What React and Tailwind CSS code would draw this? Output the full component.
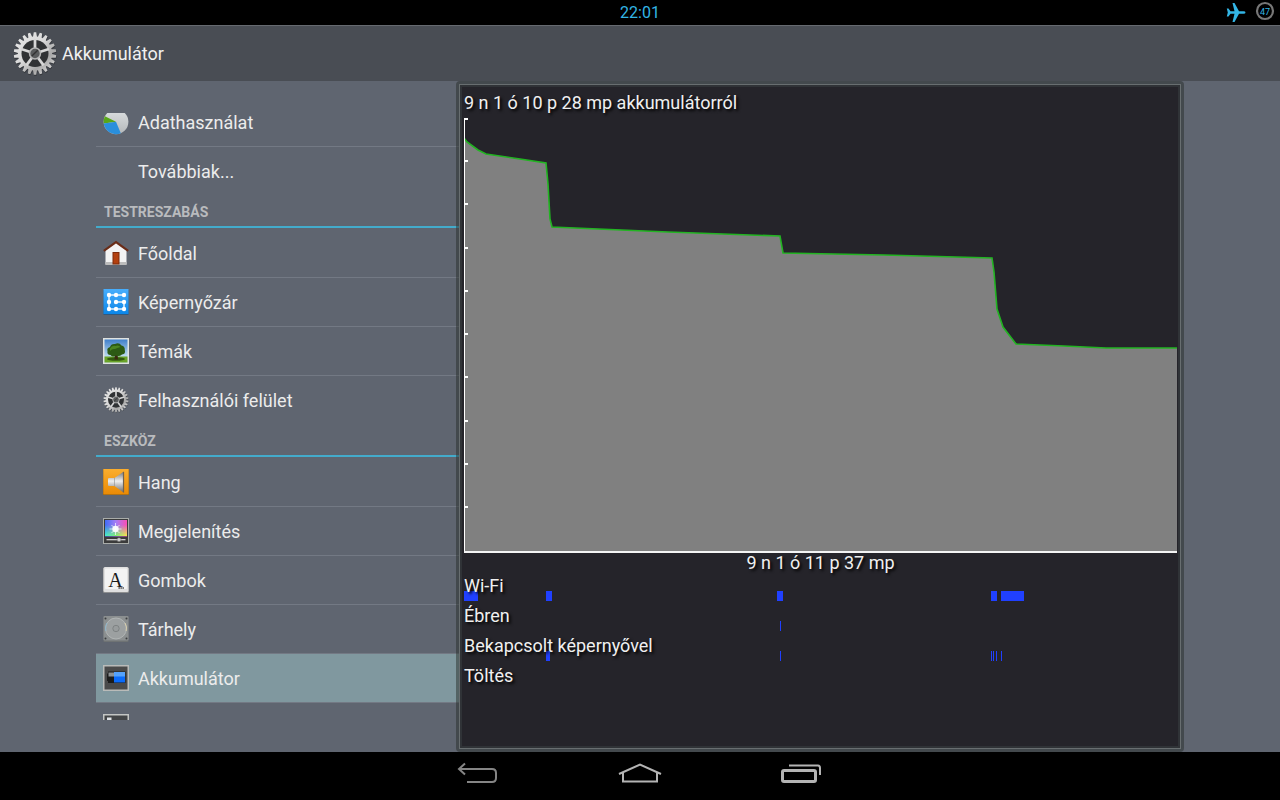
const ACCENT = "#33b5e5";

// battery level over time, in chart units (713 x 435)
const LEVELS = [
  [0, 20], [3, 24], [14, 32], [22, 36], [56, 41], [82, 45], [84, 66], [86, 101],
  [88, 109], [204, 114], [316, 118], [319, 135], [420, 137], [528, 140],
  [530, 154], [533, 191], [539, 209], [552, 226], [600, 228], [642, 230], [713, 230],
];

const ACTIVITY = [
  { label: "Wi-Fi", bars: [[0, 14], [82, 6], [313, 6], [527, 6], [537, 23]] },
  { label: "Ébren", bars: [[316, 1]] },
  { label: "Bekapcsolt képernyővel", bars: [[82, 4], [316, 1], [527, 1], [529, 1], [532, 1], [537, 1]] },
  { label: "Töltés", bars: [] },
];

const TEETH = 22;

function gearPath() {
  const pts = [];
  for (let i = 0; i < TEETH; i++) {
    const a = (i / TEETH) * Math.PI * 2;
    const step = (Math.PI * 2) / TEETH;
    [[-0.4, 17.5], [-0.2, 21.7], [0.2, 21.7], [0.4, 17.5]].forEach(([o, r]) => {
      pts.push(`${(22 + r * Math.sin(a + o * step)).toFixed(2)} ${(22 - r * Math.cos(a + o * step)).toFixed(2)}`);
    });
  }
  return `M${pts.join("L")}Z`;
}

function Gear({ id, className }) {
  return (
    <svg viewBox="0 0 44 45" className={className} aria-hidden="true">
      <defs>
        <linearGradient id={id} x1="0" y1="0" x2="1" y2="1">
          <stop offset="0" stopColor="#e8e8e8" />
          <stop offset="0.45" stopColor="#d8d8d8" />
          <stop offset="0.7" stopColor="#a8a8a8" />
          <stop offset="1" stopColor="#f2f2f2" />
        </linearGradient>
      </defs>
      <path d={gearPath()} fill="#25272a" opacity="0.6" transform="translate(0.4 1)" />
      <path d={gearPath()} fill={`url(#${id})`} />
      <circle cx="22" cy="22" r="13.8" fill="#303234" />
      {[0, 72, 144, 216, 288].map((deg) => (
        <path key={deg} d="M22 17V7" stroke="#d6d6d6" strokeWidth="2.8" transform={`rotate(${deg} 22 22)`} />
      ))}
      <circle cx="22" cy="22" r="5.6" fill="#595b5c" stroke="#b5b5b5" strokeWidth="1.6" />
      <path d="M18.8 24.5L25 18.5" stroke="#333" strokeWidth="1.5" />
    </svg>
  );
}

function Icon({ children }) {
  return (
    <svg viewBox="0 0 26 26" className="size-[26px]" aria-hidden="true">
      {children}
    </svg>
  );
}

const DataIcon = () => (
  <Icon>
    <defs>
      <linearGradient id="pie" x1="0" y1="0" x2="0" y2="1">
        <stop offset="0" stopColor="#dcdfe1" />
        <stop offset="1" stopColor="#b4b8ba" />
      </linearGradient>
    </defs>
    <circle cx="13" cy="12.8" r="12.4" fill="url(#pie)" />
    <path d="M13 12.800L1.900 7.200A12.400 12.400 0 0 0 .7 14.500Z" fill="#58a618" />
    <path d="M13 12.800L.7 14.500A12.400 12.400 0 0 0 17.800 24.200Z" fill="#2a8fdc" />
  </Icon>
);

const HomeIcon = () => (
  <Icon>
    <path d="M2.5 9.5L13 2L23.5 9.5V24.5H2.5Z" fill="#f3f3f3" />
    <path d="M2.5 22H23.5V25H2.5Z" fill="#bcbcbc" />
    <path d="M9.5 12H16.5V24.5H9.5Z" fill="#7e2a0b" />
    <path d="M10.5 13H15.5V23.5H10.5Z" fill="#b3400f" />
    <path d="M.8 10.8L13 2.2L25.2 10.8" fill="none" stroke="#6a2c17" strokeWidth="2.2" />
  </Icon>
);

const PatternIcon = () => (
  <Icon>
    <defs>
      <linearGradient id="pattern" x1="0" y1="0" x2="0" y2="1">
        <stop offset="0" stopColor="#48aefc" />
        <stop offset="1" stopColor="#0b86e8" />
      </linearGradient>
    </defs>
    <path d="M.5 1H25.5V26H.5Z" fill="#32587c" />
    <path d="M.5 0H25.5V25H.5Z" fill="url(#pattern)" />
    <path d="M21 6H6V20H21V13H13.5" fill="none" stroke="#e4f3ff" strokeWidth="1.5" />
    {[6, 13, 20].map((y) =>
      [6, 13, 21].map((x) => <circle key={`${x}-${y}`} cx={x} cy={y} r="2.2" fill="#fff" />)
    )}
  </Icon>
);

const ThemesIcon = () => (
  <Icon>
    <defs>
      <linearGradient id="sky" x1="0" y1="0" x2="0" y2="1">
        <stop offset="0" stopColor="#3f7fcb" />
        <stop offset="0.7" stopColor="#b8d8ee" />
      </linearGradient>
    </defs>
    <path d="M0 0H26V26H0Z" fill="#dfe2e0" />
    <path d="M1.5 1.5H24.5V24.5H1.5Z" fill="url(#sky)" />
    <path d="M1.5 18.5H24.5V24.5H1.5Z" fill="#6aa328" />
    <ellipse cx="13" cy="21" rx="9" ry="1.8" fill="#32590f" />
    <path d="M12 15H14.5L15 21.5H11.5Z" fill="#3b2a12" />
    <path d="M4.5 13Q3.5 10 7 9Q8 5.5 12 6Q16 4 18.5 7.5Q22 8 21.8 12Q23 16 19 16.5Q16 19 13 17.5Q9 19.5 7.5 17Q3.8 17 4.5 13Z" fill="#2c5a14" />
    <path d="M7 10.5Q9 7 12.5 8Q15.5 6.5 17.5 9Q14 10 12 11Q9 10.5 7 13Z" fill="#4b8522" />
  </Icon>
);

const SoundIcon = () => (
  <Icon>
    <defs>
      <linearGradient id="sound" x1="0" y1="0" x2="0" y2="1">
        <stop offset="0" stopColor="#fbae2e" />
        <stop offset="1" stopColor="#e98a05" />
      </linearGradient>
      <linearGradient id="horn" x1="0" y1="0" x2="0" y2="1">
        <stop offset="0" stopColor="#777" />
        <stop offset="0.45" stopColor="#efefef" />
        <stop offset="1" stopColor="#6c6c6c" />
      </linearGradient>
    </defs>
    <path d="M0 0H26V26.5H0Z" fill="#7b5a22" />
    <path d="M.3 0H25.7V25.5H.3Z" fill="url(#sound)" />
    <path d="M5 10Q5 9 6 9H11.5L20.5 2.8V23.5L11.5 17H6Q5 17 5 16Z" fill="url(#horn)" />
    <path d="M20.5 2.8V23.5" stroke="#6f6250" strokeWidth="1.2" />
    <path d="M11.5 9V17" stroke="#8d8d8d" strokeWidth=".6" />
  </Icon>
);

const DisplayIcon = () => (
  <Icon>
    <defs>
      <linearGradient id="hue" x1="0" y1="0" x2="1" y2="0">
        <stop offset="0" stopColor="#3f6cf5" />
        <stop offset="0.5" stopColor="#a57cf5" />
        <stop offset="1" stopColor="#fa4db4" />
      </linearGradient>
      <linearGradient id="hue2" x1="0" y1="0" x2="1" y2="0">
        <stop offset="0" stopColor="#43f0d0" />
        <stop offset="0.5" stopColor="#7df46d" />
        <stop offset="1" stopColor="#f6e94c" />
      </linearGradient>
      <linearGradient id="fade" x1="0" y1="0" x2="0" y2="1">
        <stop offset="0.3" stopColor="#fff" stopOpacity="0" />
        <stop offset="1" stopColor="#fff" />
      </linearGradient>
      <mask id="lower">
        <path d="M0 2H26V18H0Z" fill="url(#fade)" />
      </mask>
    </defs>
    <path d="M0 0H26V26H0Z" fill="#a9aca9" />
    <path d="M1 1H25V25H1Z" fill="#3b3b3b" />
    <path d="M2 2H24V18.5H2Z" fill="url(#hue)" />
    <path d="M2 2H24V18.5H2Z" fill="url(#hue2)" mask="url(#lower)" />
    <circle cx="12.5" cy="11" r="3.2" fill="#fff" opacity="0.9" />
    <path
      d="M12.5 5V17M6.500 11H18.500M8.500 7L16.500 15M16.500 7L8.500 15"
      stroke="#fff"
      strokeWidth="0.9"
      opacity="0.75"
    />
    <path d="M3.500 21.700H22.500" stroke="#ddd" strokeWidth="1.200" />
    <circle cx="16" cy="21.700" r="2" fill="#ccc" stroke="#666" strokeWidth=".5" />
  </Icon>
);

const KeysIcon = () => (
  <Icon>
    <rect y=".5" width="26" height="25.5" rx="1.5" fill="#8e8f90" />
    <rect x=".5" width="25" height="25" rx="1.5" fill="#e0e0e0" />
    <rect x="2" y="1.5" width="22" height="20.5" rx="1" fill="#f3f3f3" />
    <text x="12.5" y="19.5" textAnchor="middle" fontSize="20" fill="#1b1b1b" fontFamily="Liberation Serif, serif">A</text>
    <path d="M15.5 21H21" stroke="#333" strokeWidth="1.4" strokeDasharray="1.3 .7" />
  </Icon>
);

const StorageIcon = () => (
  <Icon>
    <rect x=".5" y=".5" width="25" height="25.5" rx="1" fill="#6f7374" />
    <rect x=".5" width="25" height="24.5" rx="1" fill="#8b8f90" />
    <circle cx="13" cy="12.5" r="10.5" fill="#9ca0a1" stroke="#b8bbbb" strokeWidth=".8" />
    <circle cx="13" cy="12.5" r="3.2" fill="#989c9d" stroke="#7b7f80" strokeWidth=".9" />
    <path d="M2.8 15A10.5 10.5 0 0 1 4 7" fill="none" stroke="#8eb5cb" strokeWidth="1" />
    <path d="M23.2 15A10.5 10.5 0 0 0 22 7" fill="none" stroke="#d8cfae" strokeWidth="1" />
    {[[2.5, 2.5], [23.5, 2.5], [2.5, 22.5], [23.5, 22.5]].map(([x, y]) => (
      <circle key={`${x}-${y}`} cx={x} cy={y} r="1" fill="#3c3f40" />
    ))}
  </Icon>
);

const BatteryIcon = () => (
  <Icon>
    <path d="M0 0H26V26H0Z" fill="#b9bbb9" />
    <path d="M1.5 1.5H24.5V24.5H1.5Z" fill="#4a4a4a" />
    <path d="M4 8.5H5V6.5H22.5V18H5V16H4Z" fill="#1d1d1d" />
    <path d="M5.5 7.5H11V11.5H5.5Z" fill="#8d9193" />
    <path d="M11 7H22V17.5H11Z" fill="#0b6bfa" />
    <path d="M11 7H22V11.5H11Z" fill="#55a2fc" />
  </Icon>
);

const AppsIcon = () => (
  <Icon>
    <path d="M0 0H26V26H0Z" fill="#c3c5c3" />
    <path d="M1.5 1.5H24.5V24.5H1.5Z" fill="#434547" />
    <path d="M4 3.5H8.5V8H4Z" fill="#dfe2e5" />
  </Icon>
);

const SECTIONS = [
  {
    items: [
      { label: "Adathasználat", icon: <DataIcon /> },
      { label: "Továbbiak..." },
    ],
  },
  {
    title: "Testreszabás",
    items: [
      { label: "Főoldal", icon: <HomeIcon /> },
      { label: "Képernyőzár", icon: <PatternIcon /> },
      { label: "Témák", icon: <ThemesIcon /> },
      { label: "Felhasználói felület", icon: <Gear id="gear-ui" className="size-[26px]" /> },
    ],
  },
  {
    title: "Eszköz",
    items: [
      { label: "Hang", icon: <SoundIcon /> },
      { label: "Megjelenítés", icon: <DisplayIcon /> },
      { label: "Gombok", icon: <KeysIcon /> },
      { label: "Tárhely", icon: <StorageIcon /> },
      { label: "Akkumulátor", icon: <BatteryIcon />, active: true },
      { label: "", icon: <AppsIcon />, name: "Alkalmazások" },
    ],
  },
];

function StatusBar() {
  return (
    <div className="relative flex h-[25px] shrink-0 items-center justify-center bg-black text-[#33b5e5]">
      <time className="text-base">22:01</time>
      <div className="absolute top-0 right-[5px] flex gap-[9px]">
        <svg viewBox="0 0 20 24" className="h-6 w-5" fill={ACCENT} aria-hidden="true">
          <path d="M19.500 12.500Q19.500 13.700 17.500 13.700H13L8.500 22H6.500L8.500 13.700H4.500L2.500 16.500H.8L1.800 12.500L.8 8.500H2.500L4.500 11.300H8.500L6.500 3H8.500L13 11.300H17.500Q19.500 11.300 19.500 12.500Z" />
        </svg>
        <svg viewBox="0 0 20 22" className="h-[22px] w-5" aria-hidden="true">
          <circle cx="10" cy="11" r="8" fill="none" stroke="#777" strokeWidth="2.2" />
          <text x="10" y="14.5" textAnchor="middle" fontSize="9" fill={ACCENT}>47</text>
        </svg>
      </div>
    </div>
  );
}

function SettingsList() {
  return (
    <nav className="my-8 w-[363px] shrink-0 overflow-hidden">
      <div className="-mt-[15px]">
        {SECTIONS.map((section, i) => (
          <section key={i}>
            {section.title && (
              <h2 className="mb-px flex h-8 items-center border-b-2 border-[#43abcb] px-2 pt-0.5 text-sm font-bold text-[#b9bbbe] uppercase">
                {section.title}
              </h2>
            )}
            <ul>
              {section.items.map((item, n) => (
                <li
                  key={n}
                  className="border-b border-[#737984] last:border-transparent"
                >
                  <a
                    href="#"
                    aria-label={item.name}
                    className={`flex h-12 items-center gap-[9px] pl-[7px] text-lg leading-none text-[#ececec] ${item.active ? "bg-[#80989f]" : ""}`}
                  >
                    <span className="w-[26px]">{item.icon}</span>
                    <span className="pt-0.5">{item.label}</span>
                  </a>
                </li>
              ))}
            </ul>
          </section>
        ))}
      </div>
    </nav>
  );
}

function BatteryChart() {
  const line = LEVELS.map((p) => p.join(" ")).join("L");

  return (
    <svg
      viewBox="0 0 713 435"
      preserveAspectRatio="none"
      className="min-h-0 w-full flex-1"
      role="img"
      aria-label="Akkumulátor töltöttsége"
    >
      <path d={`M0 435L${line}L713 435Z`} fill="#808080" />
      <path d={`M${line}`} fill="none" stroke="#22b422" strokeWidth="1.6" />
      <path d="M0 0H1V435H0Z" fill="#fff" />
      {[0, 42, 85, 129, 172, 215, 258, 302, 345, 388].map((y) => (
        <rect key={y} y={y} width="4" height="2" fill="#fff" />
      ))}
      <path d="M0 433H713V435H0Z" fill="#f4f4f4" />
    </svg>
  );
}

function BatteryPanel() {
  return (
    <main className="relative -ml-[3px] flex min-w-0 flex-1 rounded-sm border-3 border-[#272d29]/50">
      <div className="flex min-w-0 flex-1 border border-[#686e70]">
        <div className="flex min-w-0 flex-1 flex-col border-2 border-[#303337] bg-[#25242a] pt-px pr-px pb-[53px] pl-[2px] text-lg leading-[30px] text-[#f0f0f0] [text-shadow:2px_2px_3px_#000]">
          <p>9 n 1 ó 10 p 28 mp akkumulátorról</p>
          <BatteryChart />
          <p className="text-center leading-5">9 n 1 ó 11 p 37 mp</p>
          {ACTIVITY.map((row) => (
            <div key={row.label} className="relative h-[30px] leading-[26px]">
              {row.bars.map(([start, width]) => (
                <span
                  key={start}
                  className="absolute bottom-0.5 h-[10px] bg-[#2040ff]"
                  style={{ left: `${(start / 713) * 100}%`, width: `${(width / 713) * 100}%` }}
                />
              ))}
              <span className="relative">{row.label}</span>
            </div>
          ))}
        </div>
      </div>
    </main>
  );
}

function NavBar() {
  return (
    <footer className="flex h-12 shrink-0 items-center justify-center gap-[118px] bg-black pb-1">
      <button type="button" aria-label="Vissza">
        <svg viewBox="0 0 44 24" className="h-6 w-11" fill="none" stroke="#858585" strokeWidth="2">
          <path d="M3 7H36Q40 7 40 11V16Q40 20 36 20H11" />
          <path d="M9 1.5L3 7L9 12.5" />
        </svg>
      </button>
      <button type="button" aria-label="Kezdőképernyő">
        <svg viewBox="0 0 44 24" className="h-6 w-11" fill="none" stroke="#b4b4b4" strokeWidth="2">
          <path d="M1 12L22 2.5L43 12" />
          <path d="M5 10.5V19.5H39V10.5" />
        </svg>
      </button>
      <button type="button" aria-label="Legutóbbiak">
        <svg viewBox="0 0 44 24" className="h-6 w-11" fill="none" stroke="#b4b4b4" strokeWidth="2">
          <rect x="2.5" y="8.500" width="33" height="11" rx="1.5" strokeWidth="3" />
          <path d="M9 3.5H38Q40 3.5 40 6V13" />
        </svg>
      </button>
    </footer>
  );
}

export default function App() {
  return (
    <div className="flex h-screen min-h-[640px] flex-col bg-[#5f6570] font-[Roboto,sans-serif]">
      <StatusBar />
      <header className="flex h-14 shrink-0 items-center gap-[5px] border-t border-[#666a70] bg-[#494d54] pl-[13px]">
        <Gear id="gear-header" className="size-11" />
        <h1 className="text-lg text-[#f0f0f0]">Akkumulátor</h1>
      </header>
      <div className="flex min-h-0 flex-1 px-24">
        <SettingsList />
        <BatteryPanel />
      </div>
      <NavBar />
    </div>
  );
}
